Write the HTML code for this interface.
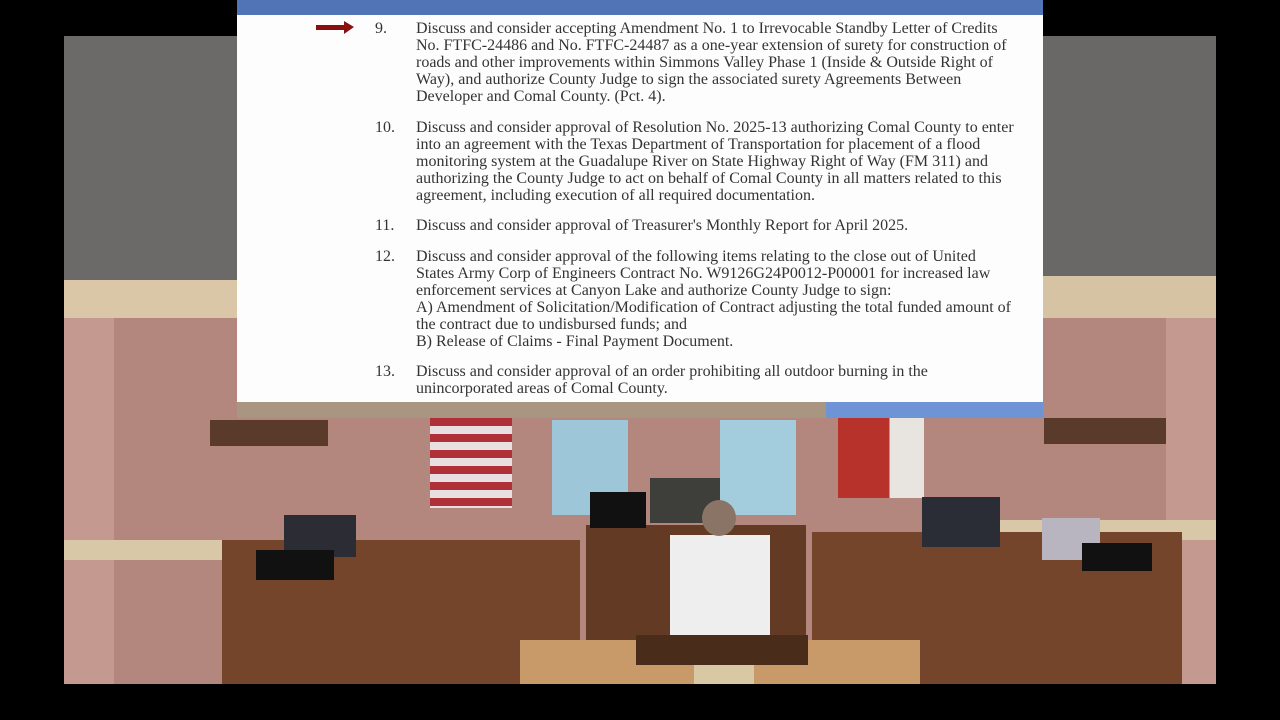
<!DOCTYPE html>
<html><head><style>
body{margin:0;width:1280px;height:720px;background:#000;position:relative;overflow:hidden;font-family:"Liberation Serif",serif}
.a{position:absolute}
.t{position:absolute;left:416px;font-size:16px;line-height:17px;color:#333;white-space:nowrap}
.n{position:absolute;left:375px;font-size:16px;line-height:17px;color:#333}
</style></head><body>
<div class="a" style="left:64px;top:36px;width:1152px;height:648px;background:#b3877e"></div>
<div class="a" style="left:64px;top:36px;width:173px;height:244px;background:#6c6a69"></div>
<div class="a" style="left:1043px;top:36px;width:173px;height:240px;background:#6a6867"></div>
<div class="a" style="left:64px;top:280px;width:173px;height:38px;background:#d9c7a8"></div>
<div class="a" style="left:1043px;top:276px;width:173px;height:42px;background:#d5c3a3"></div>
<div class="a" style="left:64px;top:318px;width:50px;height:366px;background:#c49a90"></div>
<div class="a" style="left:1166px;top:318px;width:50px;height:366px;background:#c49a90"></div>
<div class="a" style="left:64px;top:540px;width:200px;height:20px;background:#d8c8a8"></div>
<div class="a" style="left:1000px;top:520px;width:216px;height:20px;background:#d8c8a8"></div>
<div class="a" style="left:210px;top:420px;width:118px;height:26px;background:#5a3a2a"></div>
<div class="a" style="left:1044px;top:418px;width:122px;height:26px;background:#5a3a2a"></div>
<div class="a" style="left:237px;top:402px;width:806px;height:16px;background:#a89680"></div>
<div class="a" style="left:826px;top:402px;width:217px;height:16px;background:#6f94d6"></div>
<div class="a" style="left:430px;top:418px;width:82px;height:90px;background:repeating-linear-gradient(#b0303a 0 8px,#e8e0e0 8px 16px)"></div>
<div class="a" style="left:838px;top:418px;width:86px;height:80px;background:linear-gradient(90deg,#b8322c 60%,#e8e4e0 60%)"></div>
<div class="a" style="left:552px;top:420px;width:76px;height:95px;background:#9dc6d8"></div>
<div class="a" style="left:720px;top:420px;width:76px;height:95px;background:#a3ccdc"></div>
<div class="a" style="left:222px;top:540px;width:358px;height:144px;background:#74452a"></div>
<div class="a" style="left:586px;top:525px;width:220px;height:130px;background:#633a24"></div>
<div class="a" style="left:812px;top:532px;width:370px;height:152px;background:#74452a"></div>
<div class="a" style="left:520px;top:640px;width:400px;height:44px;background:#c89a6a"></div>
<div class="a" style="left:284px;top:515px;width:72px;height:42px;background:#2c2c34"></div>
<div class="a" style="left:650px;top:478px;width:70px;height:45px;background:#3e3e3a"></div>
<div class="a" style="left:922px;top:497px;width:78px;height:50px;background:#2a2c36"></div>
<div class="a" style="left:1042px;top:518px;width:58px;height:42px;background:#b8b4c0"></div>
<div class="a" style="left:256px;top:550px;width:78px;height:30px;background:#111"></div>
<div class="a" style="left:590px;top:492px;width:56px;height:36px;background:#111"></div>
<div class="a" style="left:1082px;top:543px;width:70px;height:28px;background:#111"></div>
<div class="a" style="left:670px;top:535px;width:100px;height:100px;background:#eeeeee"></div>
<div class="a" style="left:694px;top:635px;width:60px;height:49px;background:#d8c8a4"></div>
<div class="a" style="left:702px;top:500px;width:34px;height:36px;background:#8a7466;border-radius:50%"></div>
<div class="a" style="left:636px;top:635px;width:172px;height:30px;background:#4a2c1a"></div>
<div class="a" style="left:237px;top:0;width:806px;height:15px;background:#5074b6"></div>
<div class="a" style="left:237px;top:15px;width:806px;height:387px;background:#fdfdfd"></div>
<div class="a" style="left:316px;top:25px;width:30px;height:5px;background:#8a1010"></div>
<div class="a" style="left:344px;top:21px;border-left:10px solid #8a1010;border-top:6px solid transparent;border-bottom:7px solid transparent;width:0;height:0"></div>
<div class="n" style="top:20px">9.</div>
<div class="t" style="top:20px">Discuss and consider accepting Amendment No. 1 to Irrevocable Standby Letter of Credits<br>No. FTFC-24486 and No. FTFC-24487 as a one-year extension of surety for construction of<br>roads and other improvements within Simmons Valley Phase 1 (Inside &amp; Outside Right of<br>Way), and authorize County Judge to sign the associated surety Agreements Between<br>Developer and Comal County. (Pct. 4).</div>
<div class="n" style="top:119px">10.</div>
<div class="t" style="top:119px">Discuss and consider approval of Resolution No. 2025-13 authorizing Comal County to enter<br>into an agreement with the Texas Department of Transportation for placement of a flood<br>monitoring system at the Guadalupe River on State Highway Right of Way (FM 311) and<br>authorizing the County Judge to act on behalf of Comal County in all matters related to this<br>agreement, including execution of all required documentation.</div>
<div class="n" style="top:217px">11.</div>
<div class="t" style="top:217px">Discuss and consider approval of Treasurer's Monthly Report for April 2025.</div>
<div class="n" style="top:248px">12.</div>
<div class="t" style="top:248px">Discuss and consider approval of the following items relating to the close out of United<br>States Army Corp of Engineers Contract No. W9126G24P0012-P00001 for increased law<br>enforcement services at Canyon Lake and authorize County Judge to sign:<br>A) Amendment of Solicitation/Modification of Contract adjusting the total funded amount of<br>the contract due to undisbursed funds; and<br>B) Release of Claims - Final Payment Document.</div>
<div class="n" style="top:363px">13.</div>
<div class="t" style="top:363px">Discuss and consider approval of an order prohibiting all outdoor burning in the<br>unincorporated areas of Comal County.</div>
</body></html>
